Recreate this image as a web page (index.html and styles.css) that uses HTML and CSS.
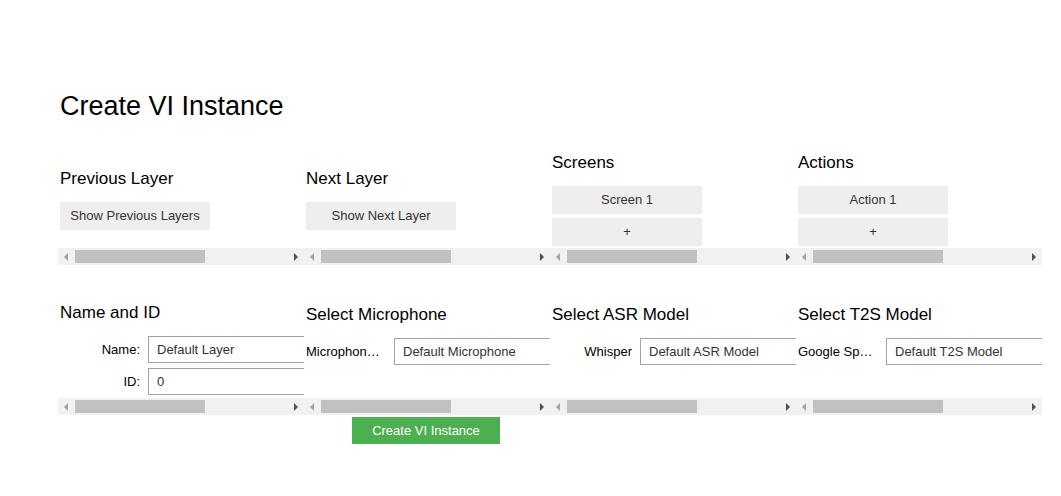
FILE: index.html
```html
<!DOCTYPE html>
<html lang="en">
<head>
<meta charset="utf-8">
<title>Create VI Instance</title>
<link rel="stylesheet" href="styles.css">
</head>
<body>
<main class="page">
  <h1 class="title">Create VI Instance</h1>

  <div class="row row-top">
    <section class="col">
      <div class="viewport">
        <div class="content">
          <h2 class="heading">Previous Layer</h2>
          <button class="btn">Show Previous Layers</button>
          <div class="spacer-prev"></div>
        </div>
      </div>
      <div class="hscroll"><span class="arrow arrow-left"></span><span class="thumb"></span><span class="arrow arrow-right"></span></div>
    </section>

    <section class="col">
      <div class="viewport">
        <div class="content">
          <h2 class="heading">Next Layer</h2>
          <button class="btn">Show Next Layer</button>
          <div class="spacer-prev"></div>
        </div>
      </div>
      <div class="hscroll"><span class="arrow arrow-left"></span><span class="thumb"></span><span class="arrow arrow-right"></span></div>
    </section>

    <section class="col">
      <div class="viewport">
        <div class="content">
          <h2 class="heading">Screens</h2>
          <div class="btn-list">
            <button class="btn">Screen 1</button>
            <button class="btn">+</button>
          </div>
        </div>
      </div>
      <div class="hscroll"><span class="arrow arrow-left"></span><span class="thumb"></span><span class="arrow arrow-right"></span></div>
    </section>

    <section class="col">
      <div class="viewport">
        <div class="content">
          <h2 class="heading">Actions</h2>
          <div class="btn-list">
            <button class="btn">Action 1</button>
            <button class="btn">+</button>
          </div>
        </div>
      </div>
      <div class="hscroll"><span class="arrow arrow-left"></span><span class="thumb"></span><span class="arrow arrow-right"></span></div>
    </section>
  </div>

  <div class="row row-bottom">
    <section class="col">
      <div class="viewport">
        <div class="content">
          <h2 class="heading">Name and ID</h2>
          <div class="fields">
            <label class="field"><span class="label">Name:</span><input class="input" type="text" value="Default Layer"></label>
            <label class="field"><span class="label">ID:</span><input class="input" type="text" value="0"></label>
          </div>
        </div>
      </div>
      <div class="hscroll"><span class="arrow arrow-left"></span><span class="thumb"></span><span class="arrow arrow-right"></span></div>
    </section>

    <section class="col">
      <div class="viewport">
        <div class="content">
          <h2 class="heading">Select Microphone</h2>
          <div class="fields fields-single">
            <label class="field"><span class="label">Microphone Device</span><input class="input" type="text" value="Default Microphone"></label>
          </div>
        </div>
      </div>
      <div class="hscroll"><span class="arrow arrow-left"></span><span class="thumb"></span><span class="arrow arrow-right"></span></div>
    </section>

    <section class="col">
      <div class="viewport">
        <div class="content">
          <h2 class="heading">Select ASR Model</h2>
          <div class="fields fields-single">
            <label class="field"><span class="label">Whisper</span><input class="input" type="text" value="Default ASR Model"></label>
          </div>
        </div>
      </div>
      <div class="hscroll"><span class="arrow arrow-left"></span><span class="thumb"></span><span class="arrow arrow-right"></span></div>
    </section>

    <section class="col">
      <div class="viewport">
        <div class="content">
          <h2 class="heading">Select T2S Model</h2>
          <div class="fields fields-single">
            <label class="field"><span class="label">Google Speech</span><input class="input" type="text" value="Default T2S Model"></label>
          </div>
        </div>
      </div>
      <div class="hscroll"><span class="arrow arrow-left"></span><span class="thumb"></span><span class="arrow arrow-right"></span></div>
    </section>
  </div>

  <button class="create">Create VI Instance</button>
</main>
</body>
</html>
```

FILE: styles.css
```css
* {
  box-sizing: border-box;
}

html, body {
  margin: 0;
  padding: 0;
  background: #ffffff;
}

body {
  font-family: "Liberation Sans", Arial, sans-serif;
  color: #000000;
}

.page {
  padding: 90px 0 0 58px;
}

.title {
  margin: 0;
  padding-left: 2px;
  font-size: 27px;
  line-height: 32px;
  font-weight: normal;
}

.row {
  display: flex;
  align-items: flex-end;
}

.row-top {
  margin-top: 31px;
}

.row-bottom {
  margin-top: 38px;
}

.col {
  width: 246px;
  flex: 0 0 246px;
  display: flex;
  flex-direction: column;
}

.viewport {
  overflow: hidden;
  width: 246px;
}

.content {
  width: 401px;
  padding-left: 2px;
  display: flex;
  flex-direction: column;
  align-items: flex-start;
}

.heading {
  margin: 0 0 13px 0;
  font-size: 17px;
  line-height: 20px;
  font-weight: normal;
  white-space: nowrap;
}

.btn {
  width: 150px;
  height: 28px;
  border: 0;
  margin: 0;
  padding: 0;
  background: #eeeeee;
  color: #333333;
  font-family: "Liberation Sans", Arial, sans-serif;
  font-size: 13px;
  line-height: 28px;
  text-align: center;
}

.spacer-prev {
  height: 18px;
}

.btn-list {
  display: flex;
  flex-direction: column;
  gap: 4px;
  padding-bottom: 2px;
}

.fields {
  display: flex;
  flex-direction: column;
  gap: 5px;
  padding-bottom: 3px;
}

.fields-single {
  padding-bottom: 33px;
}

.field {
  display: flex;
  align-items: center;
}

.label {
  width: 80px;
  flex: 0 0 80px;
  margin-right: 8px;
  text-align: right;
  font-size: 13px;
  color: #000000;
  white-space: nowrap;
  overflow: hidden;
  text-overflow: ellipsis;
}

.input {
  width: 260px;
  height: 27px;
  margin: 0;
  padding: 0 8px;
  border: 1px solid #a3a3a3;
  border-radius: 0;
  background: #ffffff;
  color: #333333;
  font-family: "Liberation Sans", Arial, sans-serif;
  font-size: 13px;
  outline: none;
}

.hscroll {
  position: relative;
  height: 17px;
  width: 246px;
  background: #f1f1f1;
}

.thumb {
  position: absolute;
  left: 17px;
  top: 2px;
  width: 130px;
  height: 13px;
  background: #c1c1c1;
}

.arrow {
  position: absolute;
  top: 5px;
  width: 0;
  height: 0;
  border-top: 4px solid transparent;
  border-bottom: 4px solid transparent;
}

.arrow-left {
  left: 6px;
  border-right: 4px solid #a3a3a3;
}

.arrow-right {
  right: 6px;
  border-left: 4px solid #505050;
}

.create {
  display: block;
  margin: 2px 0 0 294px;
  width: 148px;
  height: 27px;
  border: 0;
  padding: 0;
  background: #4caf50;
  color: #ffffff;
  font-family: "Liberation Sans", Arial, sans-serif;
  font-size: 13px;
  line-height: 27px;
  text-align: center;
}
```
